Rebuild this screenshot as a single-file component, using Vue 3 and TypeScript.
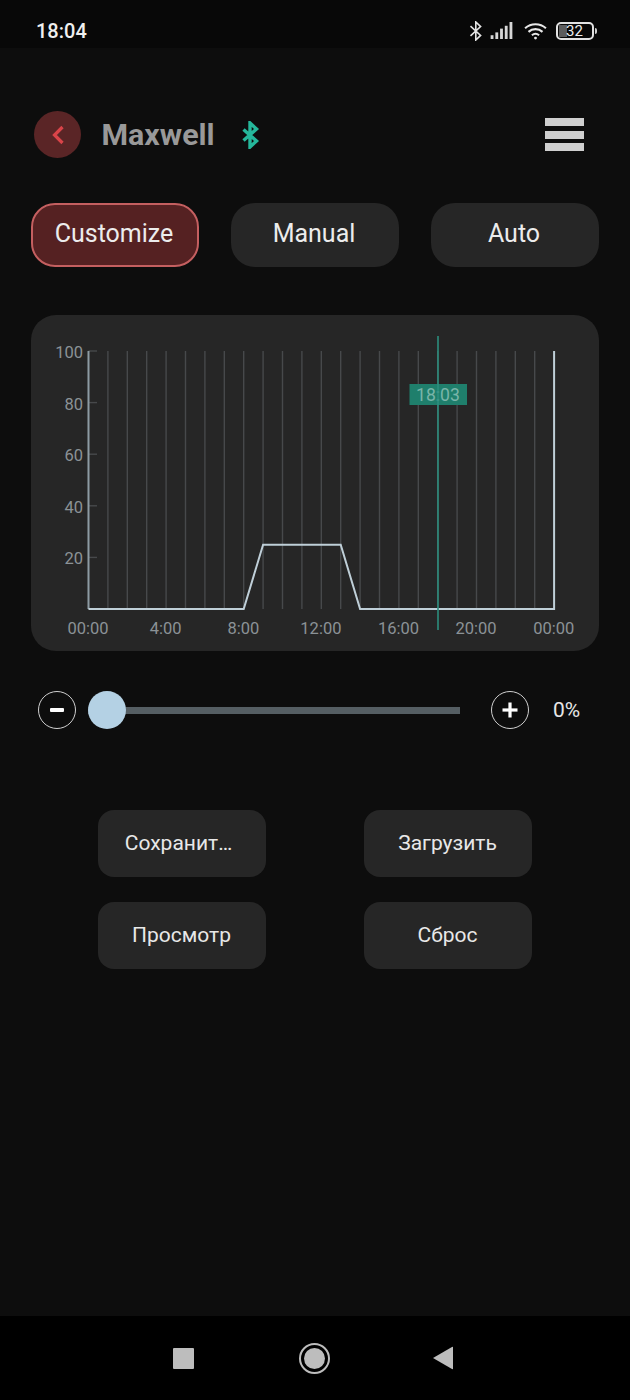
<script setup lang="ts">
const axisLeft = 88.5
const hourStep = 19.4
const axisTop = 351
const axisBottom = 609

const tabs = ['Customize', 'Manual', 'Auto']
const actions = ['Сохранит…', 'Загрузить', 'Просмотр', 'Сброс']

const hourLines = Array.from({ length: 23 }, (_, i) => axisLeft + (i + 1) * hourStep)
const yTicks = [
  { label: '100', y: 351 },
  { label: '80', y: 402.6 },
  { label: '60', y: 454.2 },
  { label: '40', y: 505.8 },
  { label: '20', y: 557.4 }
]
const xLabels = [
  { label: '00:00', hour: 0 },
  { label: '4:00', hour: 4 },
  { label: '8:00', hour: 8 },
  { label: '12:00', hour: 12 },
  { label: '16:00', hour: 16 },
  { label: '20:00', hour: 20 },
  { label: '00:00', hour: 24 }
]
const hourX = (h: number) => axisLeft + h * hourStep

const curvePoints = [
  [0, axisBottom],
  [8, axisBottom],
  [9, 544.7],
  [13, 544.7],
  [14, axisBottom],
  [24, axisBottom],
  [24, axisTop]
]
  .map(([h, y]) => `${hourX(h)},${y}`)
  .join(' ')
</script>

<template>
  <div class="screen">
    <div class="status-bar">
      <span class="clock">18:04</span>
      <div class="status-icons">
        <svg width="14" height="20" viewBox="0 0 14 20" fill="none" stroke="#e4e4e4" stroke-width="1.6">
          <path d="M1.5 5.2 11.6 14.4 6.8 19V1l4.8 4.6L1.5 14.8" />
        </svg>
        <svg class="st-signal" width="23" height="17" viewBox="0 0 23 18" fill="#d6d6d6">
          <rect x="0" y="14" width="3" height="4" />
          <rect x="5" y="11" width="3" height="7" />
          <rect x="10" y="7" width="3" height="11" />
          <rect x="15" y="4" width="3" height="14" />
          <rect x="20" y="0" width="3" height="18" />
        </svg>
        <svg class="st-wifi" width="25" height="18" viewBox="0 0 24 19" fill="none" stroke="#e8e8e8" stroke-width="2.2">
          <path d="M1 6.6C7.2 1 16.8 1 23 6.6" />
          <path d="M4.6 10.4c4.2-3.8 10.6-3.8 14.8 0" />
          <path d="M8.2 14c2.2-1.9 5.4-1.9 7.6 0" />
          <circle cx="12" cy="17" r="1.5" fill="#e8e8e8" stroke="none" />
        </svg>
        <div class="battery">
          <div class="battery-body">
            <span class="battery-fill"></span>
            <span class="battery-text">32</span>
          </div>
          <span class="battery-nub"></span>
        </div>
      </div>
    </div>

    <main class="content">
      <header class="head">
        <button class="back">
          <svg width="16" height="22" viewBox="0 0 16 22" fill="none" stroke="#d94449" stroke-width="3.2">
            <path d="M12.5 3 4.5 11l8 8" />
          </svg>
        </button>
        <span class="title">Maxwell</span>
        <svg class="head-bt" width="20" height="28" viewBox="0 0 20 28" fill="none" stroke="#25b79b" stroke-width="3.4">
          <path d="M3.5 8.5 16.5 20 10 26V2l6.5 6L3.5 19.5" />
        </svg>
        <div class="menu">
          <span></span>
          <span></span>
          <span></span>
        </div>
      </header>

      <nav class="tabs">
        <button v-for="(t, i) in tabs" :key="t" class="tab" :class="{ active: i === 0 }">{{ t }}</button>
      </nav>

      <section class="chart-card">
        <svg class="chart" width="568" height="336" viewBox="31 315 568 336">
          <line v-for="x in hourLines" :key="x" :x1="x" :x2="x" :y1="axisTop" :y2="axisBottom" class="grid" />
          <line v-for="t in yTicks" :key="t.label" :x1="axisLeft" x2="97" :y1="t.y" :y2="t.y" class="grid" />
          <line :x1="axisLeft" :x2="axisLeft" :y1="axisTop" :y2="axisBottom" class="y-axis" />
          <polyline :points="curvePoints" class="curve" />
          <text v-for="t in yTicks" :key="t.label" x="83" :y="t.y + 7" text-anchor="end" class="tick">{{ t.label }}</text>
          <text v-for="l in xLabels" :key="l.hour" :x="hourX(l.hour) - 0.4" y="633.8" text-anchor="middle" class="tick">{{ l.label }}</text>
          <rect x="409.5" y="384" width="57.5" height="21" class="now-badge" />
          <text x="438" y="401" text-anchor="middle" class="now-text">18:03</text>
          <line x1="438" x2="438" y1="336" y2="630" class="now-line" />
        </svg>
      </section>

      <div class="slider-row">
        <button class="round">
          <svg width="16" height="16" viewBox="0 0 16 16" fill="#fff"><rect x="1" y="6" width="14" height="4" rx="1" /></svg>
        </button>
        <div class="slider">
          <span class="thumb"></span>
        </div>
        <button class="round">
          <svg width="16" height="16" viewBox="0 0 16 16" fill="#fff">
            <rect x="0.5" y="6.4" width="15" height="3.2" />
            <rect x="6.4" y="0.5" width="3.2" height="15" />
          </svg>
        </button>
        <span class="percent">0%</span>
      </div>

      <div class="actions">
        <button v-for="a in actions" :key="a" class="action">{{ a }}</button>
      </div>
    </main>

    <footer class="nav-bar">
      <span class="nav-square"></span>
      <span class="nav-home"><span></span></span>
      <svg class="nav-back" width="20" height="24" viewBox="0 0 20 24" fill="#bdbdbd"><path d="M20 1v22a1 1 0 0 1-1 0L0 12 19 1a1 1 0 0 1 1 0Z" /></svg>
    </footer>
  </div>
</template>

<style>
html,
body {
  margin: 0;
  background: #0d0d0d;
}
</style>

<style scoped>
.screen {
  width: 630px;
  height: 1400px;
  display: flex;
  flex-direction: column;
  background: #0d0d0d;
  font-family: Roboto, 'Noto Sans', sans-serif;
  color: #f2f2f2;
  overflow: hidden;
}

button {
  font: inherit;
  color: inherit;
  border: none;
  padding: 0;
}

.status-bar {
  height: 48px;
  flex: none;
  box-sizing: border-box;
  padding: 13px 33px 0 36px;
  display: flex;
  align-items: center;
  justify-content: space-between;
  background: #080808;
}

.clock {
  font-size: 20px;
  font-weight: 500;
  color: #f0f0f0;
}

.status-icons {
  display: flex;
  align-items: center;
}

.st-signal {
  margin-left: 7px;
}

.st-wifi {
  margin-left: 10px;
}

.battery {
  margin-left: 8px;
  display: flex;
  align-items: center;
  gap: 1px;
}

.battery-body {
  width: 38px;
  height: 18px;
  box-sizing: border-box;
  border: 2px solid #e2e2e2;
  border-radius: 5px;
  display: flex;
  align-items: center;
  justify-content: center;
  position: relative;
}

.battery-fill {
  position: absolute;
  left: 1px;
  top: 1px;
  bottom: 1px;
  width: 8px;
  background: #5c5c5c;
}

.battery-text {
  position: relative;
  font-size: 15px;
  line-height: 14px;
  color: #eee;
}

.battery-nub {
  width: 2.5px;
  height: 6px;
  background: #d0d0d0;
  border-radius: 0 2px 2px 0;
}

.content {
  flex: 1;
  padding: 63px 31px 0;
  display: flex;
  flex-direction: column;
}

.head {
  height: 47px;
  display: flex;
  align-items: center;
  padding: 0 15px 0 3px;
}

.back {
  width: 47px;
  height: 47px;
  border-radius: 50%;
  background: #5a2526;
  display: flex;
  align-items: center;
  justify-content: center;
}

.title {
  margin-left: 20.5px;
  font-size: 30.4px;
  font-weight: 700;
  color: #999;
}

.head-bt {
  margin-left: 25px;
}

.menu {
  margin-left: auto;
  width: 39px;
  display: flex;
  flex-direction: column;
  gap: 4.5px;
}

.menu span {
  height: 8px;
  background: #cfcfcf;
}

.tabs {
  margin-top: 45px;
  display: flex;
  justify-content: space-between;
}

.tab {
  width: 168px;
  height: 64px;
  box-sizing: border-box;
  padding: 0 2px 3px 0;
  border-radius: 24px;
  background: #262626;
  font-size: 25px;
  color: #ececec;
}

.tab.active {
  background: #552122;
  border: 2px solid #c45f60;
}

.chart-card {
  margin-top: 48px;
  height: 336px;
  border-radius: 25px;
  background: #262626;
}

.chart {
  display: block;
}

.grid {
  stroke: #47494b;
  stroke-width: 1.4;
}

.y-axis {
  stroke: #8d9ba3;
  stroke-width: 2;
}

.curve {
  fill: none;
  stroke: #bfcfd8;
  stroke-width: 2;
}

.tick {
  font-size: 16.5px;
  fill: #8b9296;
}

.now-badge {
  fill: #1f7f6c;
}

.now-text {
  font-size: 17.6px;
  fill: #79b5a9;
}

.now-line {
  stroke: #2c8e7e;
  stroke-width: 1.6;
}

.slider-row {
  margin-top: 40px;
  height: 38px;
  padding-left: 7px;
  display: flex;
  align-items: center;
}

.round {
  width: 38px;
  height: 38px;
  flex: none;
  box-sizing: border-box;
  border-radius: 50%;
  border: 1px solid #d0d0d0;
  background: transparent;
  display: flex;
  align-items: center;
  justify-content: center;
}

.slider {
  margin-left: 12px;
  width: 372px;
  height: 7px;
  background: #555e63;
  display: flex;
  align-items: center;
}

.thumb {
  width: 38px;
  height: 38px;
  border-radius: 50%;
  background: #b4d1e4;
}

.slider + .round {
  margin-left: 31px;
}

.percent {
  margin-left: 24px;
  font-size: 21px;
  color: #e6e6e6;
}

.actions {
  margin-top: 81px;
  padding-left: 67px;
  display: grid;
  grid-template-columns: 168px 168px;
  column-gap: 98px;
  row-gap: 25px;
}

.action {
  height: 67px;
  padding: 0 1px 2px 0;
  border-radius: 16px;
  background: #262626;
  font-size: 21px;
  color: #e8e8e8;
}

.action:first-child {
  padding-right: 7px;
}

.nav-bar {
  height: 84px;
  flex: none;
  box-sizing: border-box;
  padding-left: 173px;
  background: #000;
  display: flex;
  align-items: center;
}

.nav-square {
  width: 21px;
  height: 21px;
  border-radius: 1px;
  background: #bdbdbd;
}

.nav-home {
  margin-left: 105px;
  width: 31px;
  height: 31px;
  box-sizing: border-box;
  border: 2px solid #bdbdbd;
  border-radius: 50%;
  display: flex;
  align-items: center;
  justify-content: center;
}

.nav-home span {
  width: 21px;
  height: 21px;
  border-radius: 50%;
  background: #bdbdbd;
}

.nav-back {
  margin-left: 103px;
}
</style>
